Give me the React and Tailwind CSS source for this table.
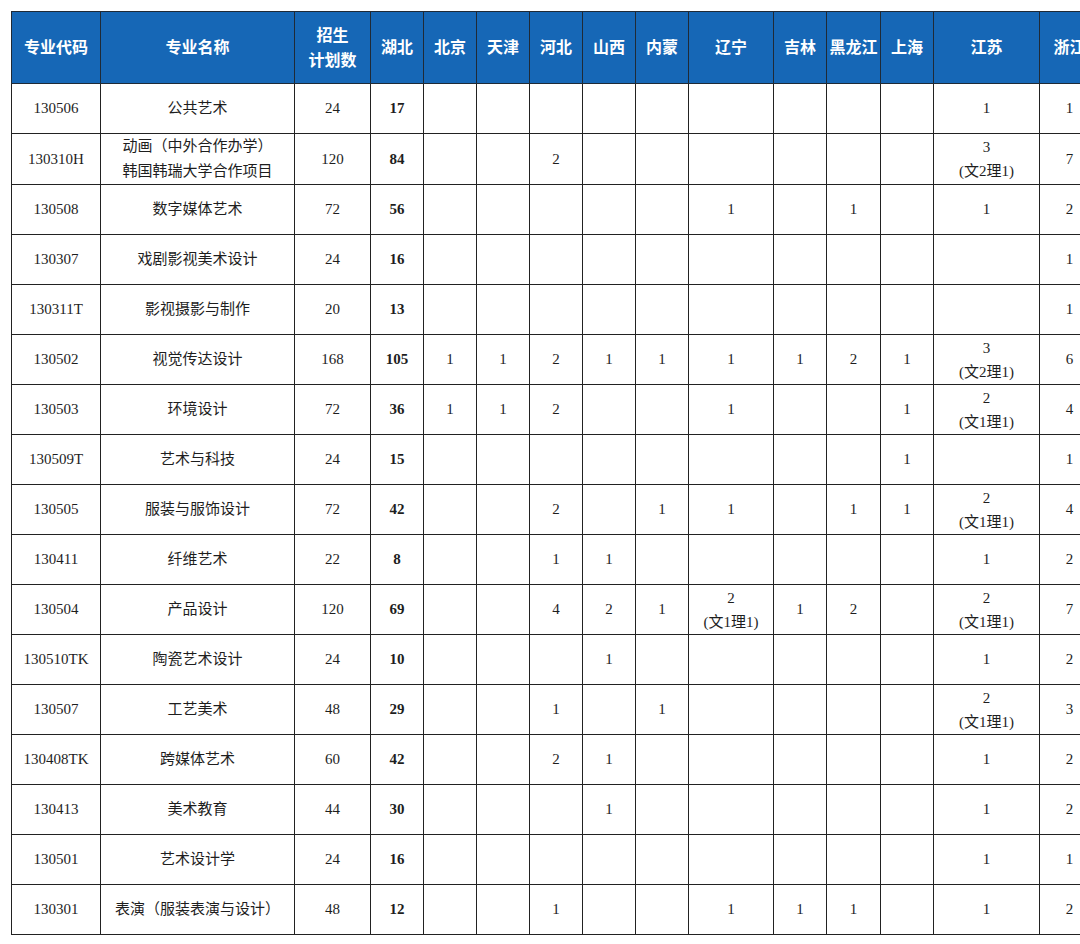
const cols = ['湖北','北京','天津','河北','山西','内蒙','辽宁','吉林','黑龙江','上海','江苏','浙江'];

const W = (a, b) => ({ t: a, s: b });

const rows = [
  ['130506', ['公共艺术'], '24', '17', {江苏: '1', 浙江: '1'}],
  ['130310H', ['动画（中外合作办学）', '韩国韩瑞大学合作项目'], '120', '84', {河北: '2', 江苏: W('3', '(文2理1)'), 浙江: '7'}],
  ['130508', ['数字媒体艺术'], '72', '56', {辽宁: '1', 黑龙江: '1', 江苏: '1', 浙江: '2'}],
  ['130307', ['戏剧影视美术设计'], '24', '16', {浙江: '1'}],
  ['130311T', ['影视摄影与制作'], '20', '13', {浙江: '1'}],
  ['130502', ['视觉传达设计'], '168', '105', {北京: '1', 天津: '1', 河北: '2', 山西: '1', 内蒙: '1', 辽宁: '1', 吉林: '1', 黑龙江: '2', 上海: '1', 江苏: W('3', '(文2理1)'), 浙江: '6'}],
  ['130503', ['环境设计'], '72', '36', {北京: '1', 天津: '1', 河北: '2', 辽宁: '1', 上海: '1', 江苏: W('2', '(文1理1)'), 浙江: '4'}],
  ['130509T', ['艺术与科技'], '24', '15', {上海: '1', 浙江: '1'}],
  ['130505', ['服装与服饰设计'], '72', '42', {河北: '2', 内蒙: '1', 辽宁: '1', 黑龙江: '1', 上海: '1', 江苏: W('2', '(文1理1)'), 浙江: '4'}],
  ['130411', ['纤维艺术'], '22', '8', {河北: '1', 山西: '1', 江苏: '1', 浙江: '2'}],
  ['130504', ['产品设计'], '120', '69', {河北: '4', 山西: '2', 内蒙: '1', 辽宁: W('2', '(文1理1)'), 吉林: '1', 黑龙江: '2', 江苏: W('2', '(文1理1)'), 浙江: '7'}],
  ['130510TK', ['陶瓷艺术设计'], '24', '10', {山西: '1', 江苏: '1', 浙江: '2'}],
  ['130507', ['工艺美术'], '48', '29', {河北: '1', 内蒙: '1', 江苏: W('2', '(文1理1)'), 浙江: '3'}],
  ['130408TK', ['跨媒体艺术'], '60', '42', {河北: '2', 山西: '1', 江苏: '1', 浙江: '2'}],
  ['130413', ['美术教育'], '44', '30', {山西: '1', 江苏: '1', 浙江: '2'}],
  ['130501', ['艺术设计学'], '24', '16', {江苏: '1', 浙江: '1'}],
  ['130301', ['表演（服装表演与设计）'], '48', '12', {河北: '1', 辽宁: '1', 吉林: '1', 黑龙江: '1', 江苏: '1', 浙江: '2'}],
];

const widths = ['w-[53px]','w-[53px]','w-[53px]','w-[53px]','w-[53px]','w-[53px]','w-[85px]','w-[53px]','w-[54px]','w-[53px]','w-[106px]','w-[60px]'];

function Cell({ v }) {
  if (!v) return null;
  if (typeof v === 'string') return <span>{v}</span>;
  return (
    <div className="flex flex-col items-center leading-[24px]">
      <span>{v.t}</span>
      <span>{v.s}</span>
    </div>
  );
}

export default function App() {
  const font = { fontFamily: '"Liberation Serif", "Noto Sans CJK SC", serif' };
  return (
    <div className="w-[1080px] h-[944px] overflow-hidden bg-white pt-[11px] pl-[11px]" style={font}>
      <table className="table-fixed border-collapse w-[1088px] text-[#1e1e1e] text-[15px]">
        <colgroup>
          <col className="w-[89px]" />
          <col className="w-[194px]" />
          <col className="w-[76px]" />
          {widths.map((w, i) => <col key={i} className={w} />)}
        </colgroup>
        <thead>
          <tr className="h-[72px] bg-[#1667b6] text-white font-bold text-[16px]">
            <th className="border-[1.5px] border-[#1f2a36] font-bold">专业代码</th>
            <th className="border-[1.5px] border-[#1f2a36] font-bold">专业名称</th>
            <th className="border-[1.5px] border-[#1f2a36] font-bold leading-[25px]">招生<br />计划数</th>
            {cols.map(c => (
              <th key={c} className="border-[1.5px] border-[#1f2a36] font-bold whitespace-nowrap px-0">{c}</th>
            ))}
          </tr>
        </thead>
        <tbody>
          {rows.map((r, i) => (
            <tr key={i} className="h-[50px]">
              <td className="border-[1.5px] border-[#222] text-center">{r[0]}</td>
              <td className="border-[1.5px] border-[#222] text-center text-[15px] leading-[25px]">
                {r[1].map((t, j) => <div key={j}>{t}</div>)}
              </td>
              <td className="border-[1.5px] border-[#222] text-center">{r[2]}</td>
              <td className="border-[1.5px] border-[#222] text-center font-bold">{r[3]}</td>
              {cols.slice(1).map(c => (
                <td key={c} className="border-[1.5px] border-[#222] text-center">
                  <Cell v={r[4][c]} />
                </td>
              ))}
            </tr>
          ))}
        </tbody>
      </table>
    </div>
  );
}
